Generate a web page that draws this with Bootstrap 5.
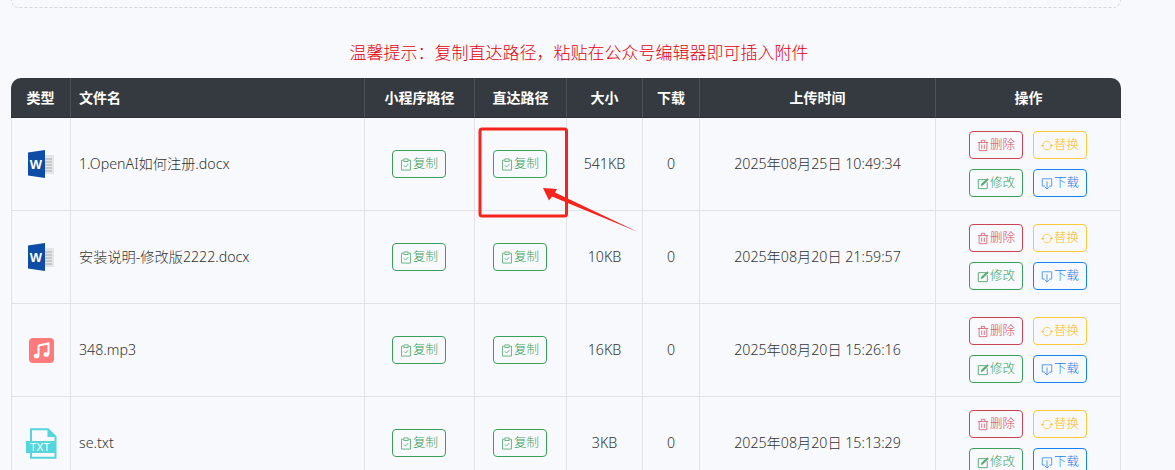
<!DOCTYPE html>
<html lang="zh">
<head>
<meta charset="utf-8">
<title>文件列表</title>
<link href="https://cdn.jsdelivr.net/npm/bootstrap@5.3.0/dist/css/bootstrap.min.css" rel="stylesheet">
<style>
html,body{height:470px;overflow:hidden;}
body{background:#f8f9fc;font-family:"Noto Sans","Noto Sans CJK SC",sans-serif;color:#333;position:relative;}
.page-wrap{padding:0 54px 0 11px;height:470px;overflow:hidden;}
.dash-box{height:8px;border:1px dashed #d6d6d6;border-top:0;border-radius:0 0 10px 10px;}
.tip-line{padding:33px 0 0 26px;height:70px;line-height:24px;color:#e4000f;font-size:17px;font-weight:300;text-align:center;letter-spacing:0;}
.file-table{width:1110px;table-layout:fixed;border-collapse:separate;border-spacing:0;margin:0;}
.file-table th{height:40px;background:#343a40;color:#fff;font-size:14px;font-weight:700;padding:0;text-align:center;vertical-align:middle;border-left:1px solid #4d5358;border-bottom:1px solid #2b3035;}
.file-table th:first-child{border-top-left-radius:10px;border-left:0;}
.file-table th:last-child{border-top-right-radius:10px;}
.file-table td{height:93px;padding:0;font-size:14.2px;text-align:center;vertical-align:middle;background:transparent;border-left:1px solid #dfe2e7;border-bottom:1px solid #dfe2e7;color:#333;font-weight:300;}
.file-table td:last-child{border-right:1px solid #dfe2e7;}
.file-table td.text-cell{padding-bottom:1px;}
.file-table td.copy-cell{padding-right:1px;}
.file-table th.name-col,.file-table td.name-col{text-align:left;padding-left:8px;}
.act-btn{display:inline-flex;align-items:center;justify-content:center;width:54px;height:28px;padding:1px 0 0;font-size:12.5px;font-weight:300;line-height:1;border-radius:4px;background:transparent;}
.act-btn svg{width:12px;height:13px;flex:none;margin-right:1px;opacity:.85;}
.tone-green{--bs-btn-color:#3d9f5c;--bs-btn-border-color:#3a9f5c;}
.tone-red{--bs-btn-color:#d4475a;--bs-btn-border-color:#cb4453;}
.tone-amber{--bs-btn-color:#fbbb22;--bs-btn-border-color:#fdc83a;}
.tone-blue{--bs-btn-color:#1f7de8;--bs-btn-border-color:#1683f0;}
.act-grid{display:grid;grid-template-columns:54px 54px;gap:10px;justify-content:center;}
.type-ico{display:block;margin:0 auto;}
.note-layer{position:absolute;left:0;top:0;pointer-events:none;}
</style>
</head>
<body>
<svg width="0" height="0" class="d-none" aria-hidden="true">
<symbol id="i-clip" viewBox="0 0 14 15"><path d="M4 2.500H1.800v11.500h10.400V2.500H10M4.500 1h5v3h-5z" fill="none" stroke="currentColor" stroke-width="1"/><path d="M4.500 8.500l2 2 3.200-3.600" fill="none" stroke="currentColor" stroke-width="1"/></symbol>
<symbol id="i-trash" viewBox="0 0 14 15"><path d="M1 4h12M5 4V1.500h4V4M2.500 4v9.500h9V4M5.500 6.500v5M8.500 6.500v5" fill="none" stroke="currentColor" stroke-width="1"/></symbol>
<symbol id="i-swap" viewBox="0 0 14 15"><path d="M2 7.500A5 5 0 0 1 11 4.500M12 7.500A5 5 0 0 1 3 10.500" fill="none" stroke="currentColor" stroke-width="1"/><path d="M0 7h4L2 9.500zM10 8h4l-2-2.500z" fill="currentColor"/></symbol>
<symbol id="i-edit" viewBox="0 0 14 15"><path d="M11 3H1.500v10.500H12V6" fill="none" stroke="currentColor" stroke-width="1.100"/><path d="M4.500 10.500l.6-2.600 7-6.400 1.600 1.700-7 6.500z" fill="currentColor"/></symbol>
<symbol id="i-down" viewBox="0 0 14 15"><path d="M4.500 10.500H1.500V2h11v8.500H9.500M7 5v9M4.500 11.500L7 14l2.500-2.500" fill="none" stroke="currentColor" stroke-width="1"/></symbol>
<symbol id="i-word" viewBox="0 0 28 30"><rect x="15" y="6" width="12" height="19" fill="#e4e5e7"/><path d="M17 10h8M17 13h8M17 16h8M17 19h8M17 22h8" stroke="#a9abae" stroke-width="1.200"/><path d="M1 3.500L18 1v28L1 26.500z" fill="#0f4ca5"/><text x="9" y="20" font-family="Liberation Sans,sans-serif" font-size="13" font-weight="700" fill="#fff" text-anchor="middle">W</text></symbol>
</svg>
<div class="page-wrap">
<div class="dash-box"></div>
<div class="tip-line">温馨提示：复制直达路径，粘贴在公众号编辑器即可插入附件</div>
<table class="table file-table">
<colgroup><col style="width:59px"><col style="width:294px"><col style="width:110px"><col style="width:92px"><col style="width:76px"><col style="width:57px"><col style="width:236px"><col style="width:186px"></colgroup>
<thead><tr><th>类型</th><th class="name-col">文件名</th><th>小程序路径</th><th>直达路径</th><th>大小</th><th>下载</th><th>上传时间</th><th>操作</th></tr></thead>
<tbody>
<tr>
<td><svg class="type-ico" width="28" height="30"><use href="#i-word"/></svg></td>
<td class="name-col text-cell">1.OpenAI如何注册.docx</td>
<td class="copy-cell"><button class="btn tone-green act-btn"><svg><use href="#i-clip"/></svg>复制</button></td>
<td class="copy-cell"><button class="btn tone-green act-btn"><svg><use href="#i-clip"/></svg>复制</button></td>
<td class="text-cell">541KB</td><td class="text-cell">0</td><td class="text-cell">2025年08月25日 10:49:34</td>
<td><div class="act-grid"><button class="btn tone-red act-btn"><svg><use href="#i-trash"/></svg>删除</button><button class="btn tone-amber act-btn"><svg><use href="#i-swap"/></svg>替换</button><button class="btn tone-green act-btn"><svg><use href="#i-edit"/></svg>修改</button><button class="btn tone-blue act-btn"><svg><use href="#i-down"/></svg>下载</button></div></td>
</tr>
<tr>
<td><svg class="type-ico" width="28" height="30"><use href="#i-word"/></svg></td>
<td class="name-col text-cell">安装说明-修改版2222.docx</td>
<td class="copy-cell"><button class="btn tone-green act-btn"><svg><use href="#i-clip"/></svg>复制</button></td>
<td class="copy-cell"><button class="btn tone-green act-btn"><svg><use href="#i-clip"/></svg>复制</button></td>
<td class="text-cell">10KB</td><td class="text-cell">0</td><td class="text-cell">2025年08月20日 21:59:57</td>
<td><div class="act-grid"><button class="btn tone-red act-btn"><svg><use href="#i-trash"/></svg>删除</button><button class="btn tone-amber act-btn"><svg><use href="#i-swap"/></svg>替换</button><button class="btn tone-green act-btn"><svg><use href="#i-edit"/></svg>修改</button><button class="btn tone-blue act-btn"><svg><use href="#i-down"/></svg>下载</button></div></td>
</tr>
<tr>
<td><svg class="type-ico" width="25" height="25" viewBox="0 0 25 25"><rect width="25" height="25" rx="4" fill="#ff7b7b"/><path d="M9.500 7.500l10-2v11" fill="none" stroke="#fff" stroke-width="2"/><path d="M9.500 7.500v10" stroke="#fff" stroke-width="2"/><ellipse cx="7.500" cy="18" rx="2.800" ry="2.300" fill="#fff"/><ellipse cx="17.200" cy="16.500" rx="2.800" ry="2.300" fill="#fff"/></svg></td>
<td class="name-col text-cell">348.mp3</td>
<td class="copy-cell"><button class="btn tone-green act-btn"><svg><use href="#i-clip"/></svg>复制</button></td>
<td class="copy-cell"><button class="btn tone-green act-btn"><svg><use href="#i-clip"/></svg>复制</button></td>
<td class="text-cell">16KB</td><td class="text-cell">0</td><td class="text-cell">2025年08月20日 15:26:16</td>
<td><div class="act-grid"><button class="btn tone-red act-btn"><svg><use href="#i-trash"/></svg>删除</button><button class="btn tone-amber act-btn"><svg><use href="#i-swap"/></svg>替换</button><button class="btn tone-green act-btn"><svg><use href="#i-edit"/></svg>修改</button><button class="btn tone-blue act-btn"><svg><use href="#i-down"/></svg>下载</button></div></td>
</tr>
<tr>
<td><svg class="type-ico" width="31" height="31" viewBox="0 0 31 31"><path d="M5 13V1.200h17l7.500 7.500V29.800H5V25" fill="none" stroke="#55d5de" stroke-width="2"/><path d="M21.500 1.500v7.500h8z" fill="#55d5de"/><rect x="0" y="13" width="30" height="12" fill="#55d5de"/><text x="14" y="23" font-family="Liberation Sans,sans-serif" font-size="10.500" fill="#fff" text-anchor="middle">TXT</text></svg></td>
<td class="name-col text-cell">se.txt</td>
<td class="copy-cell"><button class="btn tone-green act-btn"><svg><use href="#i-clip"/></svg>复制</button></td>
<td class="copy-cell"><button class="btn tone-green act-btn"><svg><use href="#i-clip"/></svg>复制</button></td>
<td class="text-cell">3KB</td><td class="text-cell">0</td><td class="text-cell">2025年08月20日 15:13:29</td>
<td><div class="act-grid"><button class="btn tone-red act-btn"><svg><use href="#i-trash"/></svg>删除</button><button class="btn tone-amber act-btn"><svg><use href="#i-swap"/></svg>替换</button><button class="btn tone-green act-btn"><svg><use href="#i-edit"/></svg>修改</button><button class="btn tone-blue act-btn"><svg><use href="#i-down"/></svg>下载</button></div></td>
</tr>
</tbody>
</table>
</div>
<svg class="note-layer" width="1175" height="470" viewBox="0 0 1175 470" aria-hidden="true">
<rect x="480" y="129" width="86.500" height="87" rx="2" fill="none" stroke="#f5241c" stroke-width="3"/>
<path d="M543 188l14 1-2 3.500 83 39.500-86-35.500-3 4z" fill="#f5241c"/>
</svg>
<script src="https://cdn.jsdelivr.net/npm/bootstrap@5.3.0/dist/js/bootstrap.bundle.min.js"></script>
</body>
</html>
